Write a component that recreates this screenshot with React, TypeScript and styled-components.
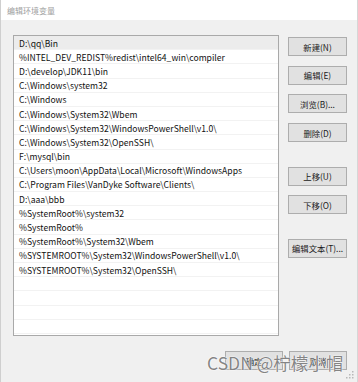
import styled, { createGlobalStyle } from "styled-components";

const GlobalStyle = createGlobalStyle`
  html, body {
    margin: 0;
    padding: 0;
    background: #f0f0f0;
  }
  * {
    box-sizing: border-box;
  }
`;

const FONT = `"Noto Sans CJK SC", "Noto Sans", sans-serif`;

const paths = [
  "D:\\qq\\Bin",
  "%INTEL_DEV_REDIST%redist\\intel64_win\\compiler",
  "D:\\develop\\JDK11\\bin",
  "C:\\Windows\\system32",
  "C:\\Windows",
  "C:\\Windows\\System32\\Wbem",
  "C:\\Windows\\System32\\WindowsPowerShell\\v1.0\\",
  "C:\\Windows\\System32\\OpenSSH\\",
  "F:\\mysql\\bin",
  "C:\\Users\\moon\\AppData\\Local\\Microsoft\\WindowsApps",
  "C:\\Program Files\\VanDyke Software\\Clients\\",
  "D:\\aaa\\bbb",
  "%SystemRoot%\\system32",
  "%SystemRoot%",
  "%SystemRoot%\\System32\\Wbem",
  "%SYSTEMROOT%\\System32\\WindowsPowerShell\\v1.0\\",
  "%SYSTEMROOT%\\System32\\OpenSSH\\",
];

const EMPTY_ROWS = 4;

const Window = styled.div`
  position: relative;
  width: 358px;
  height: 382px;
  display: flex;
  flex-direction: column;
  background: #f0f0f0;
  border-left: 1px solid #cfcfcf;
  border-right: 1px solid #d6d6d6;
  font-family: ${FONT};
  overflow: hidden;
`;

const TitleBar = styled.div`
  height: 20px;
  flex-shrink: 0;
  background: #ffffff;
  display: flex;
  align-items: center;
  padding-left: 6px;
  font-size: 8px;
  color: #a0a0a0;
`;

const Body = styled.div`
  flex: 1;
  display: flex;
  flex-direction: column;
  padding: 15px 10px 0 12px;
`;

const MainRow = styled.div`
  display: flex;
  gap: 9px;
`;

const PathList = styled.div`
  width: 267px;
  height: 301px;
  background: #ffffff;
  border: 1px solid #a9a9a9;
  overflow: hidden;
`;

const Row = styled.div<{ $selected?: boolean }>`
  height: 14.2px;
  display: flex;
  align-items: center;
  padding-left: 5px;
  font-size: 8.6px;
  color: #111;
  white-space: nowrap;
  background: ${(p) => (p.$selected ? "#ececec" : "#ffffff")};
  border-bottom: 1px solid #f2f2f2;
`;

const ButtonColumn = styled.div`
  width: 59px;
  display: flex;
  flex-direction: column;
  gap: 9.7px;
  padding-top: 2px;
`;

const DialogButton = styled.button<{ $gapBefore?: number; $width?: number }>`
  width: ${(p) => p.$width ?? 59}px;
  height: 19px;
  margin-top: ${(p) => p.$gapBefore ?? 0}px;
  padding: 0;
  background: #e1e1e1;
  border: 1px solid #adadad;
  font-family: ${FONT};
  font-size: 8.4px;
  color: #1a1a1a;
  display: flex;
  align-items: center;
  justify-content: center;
  white-space: nowrap;
`;

const Footer = styled.div`
  display: flex;
  justify-content: flex-end;
  gap: 6px;
  margin-top: 15px;
`;

const Watermark = styled.div`
  position: absolute;
  left: 206px;
  top: 350px;
  font-family: "Noto Sans CJK SC", "Noto Sans", sans-serif;
  font-size: 17.5px;
  color: rgba(110, 110, 110, 0.85);
  text-shadow: 0 0 2px #ffffff, 0 0 1px #ffffff;
  white-space: nowrap;
  pointer-events: none;
`;

const Grip = styled.svg`
  position: absolute;
  right: 3px;
  bottom: 3px;
`;

export default function App() {
  return (
    <>
      <GlobalStyle />
      <Window>
        <TitleBar>编辑环境变量</TitleBar>
        <Body>
          <MainRow>
            <PathList>
              {paths.map((p, i) => (
                <Row key={p} $selected={i === 0}>
                  {p}
                </Row>
              ))}
              {Array.from({ length: EMPTY_ROWS }).map((_, i) => (
                <Row key={`empty-${i}`} />
              ))}
            </PathList>
            <ButtonColumn>
              <DialogButton>新建(N)</DialogButton>
              <DialogButton>编辑(E)</DialogButton>
              <DialogButton>浏览(B)...</DialogButton>
              <DialogButton>删除(D)</DialogButton>
              <DialogButton $gapBefore={15}>上移(U)</DialogButton>
              <DialogButton>下移(O)</DialogButton>
              <DialogButton $gapBefore={14.6}>编辑文本(T)...</DialogButton>
            </ButtonColumn>
          </MainRow>
          <Footer>
            <DialogButton $width={58}>确定</DialogButton>
            <DialogButton $width={58}>取消</DialogButton>
          </Footer>
        </Body>
        <Watermark>CSDN @柠檬小帽</Watermark>
        <Grip width="8" height="8" viewBox="0 0 8 8">
          <rect x="6" y="0" width="1.5" height="1.5" fill="#b8b8b8" />
          <rect x="3" y="3" width="1.5" height="1.5" fill="#b8b8b8" />
          <rect x="6" y="3" width="1.5" height="1.5" fill="#b8b8b8" />
          <rect x="0" y="6" width="1.5" height="1.5" fill="#b8b8b8" />
          <rect x="3" y="6" width="1.5" height="1.5" fill="#b8b8b8" />
          <rect x="6" y="6" width="1.5" height="1.5" fill="#b8b8b8" />
        </Grip>
      </Window>
    </>
  );
}
